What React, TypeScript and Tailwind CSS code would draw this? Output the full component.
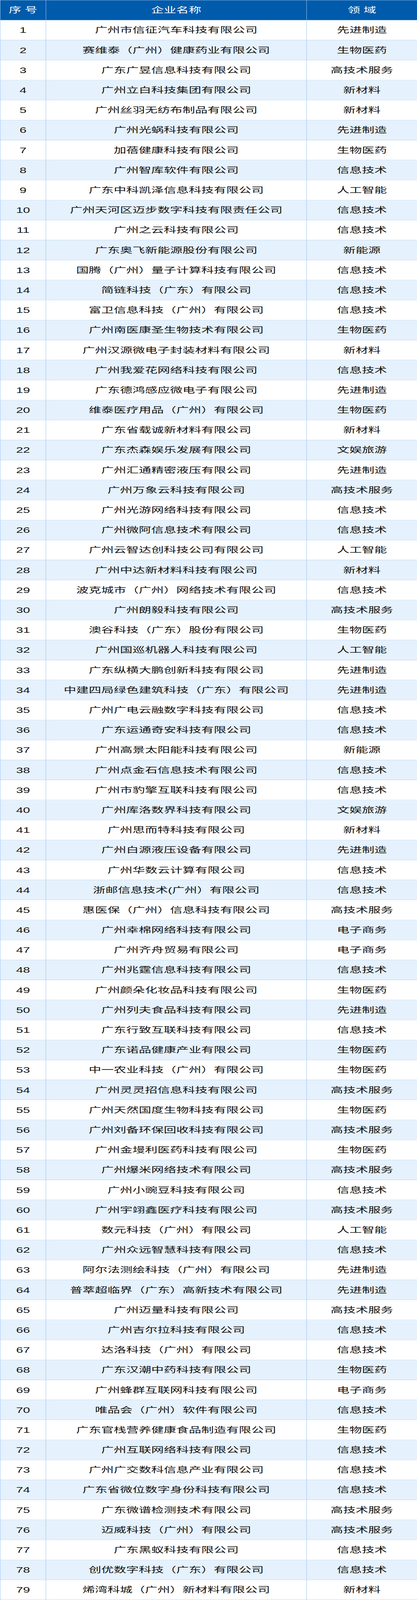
import { useLayoutEffect, useState } from 'react';

const rows: [string, string][] = [
  ['广州市信征汽车科技有限公司', '先进制造'],
  ['赛维泰（广州）健康药业有限公司', '生物医药'],
  ['广东广昱信息科技有限公司', '高技术服务'],
  ['广州立白科技集团有限公司', '新材料'],
  ['广州丝羽无纺布制品有限公司', '新材料'],
  ['广州光蜗科技有限公司', '先进制造'],
  ['加蓓健康科技有限公司', '生物医药'],
  ['广州智库软件有限公司', '信息技术'],
  ['广东中科凯泽信息科技有限公司', '人工智能'],
  ['广州天河区迈步数字科技有限责任公司', '信息技术'],
  ['广州之云科技有限公司', '信息技术'],
  ['广东奥飞新能源股份有限公司', '新能源'],
  ['国腾（广州）量子计算科技有限公司', '信息技术'],
  ['简链科技（广东）有限公司', '信息技术'],
  ['富卫信息科技（广州）有限公司', '信息技术'],
  ['广州南医康圣生物技术有限公司', '生物医药'],
  ['广州汉源微电子封装材料有限公司', '新材料'],
  ['广州我爱花网络科技有限公司', '信息技术'],
  ['广东德鸿感应微电子有限公司', '先进制造'],
  ['维泰医疗用品（广州）有限公司', '生物医药'],
  ['广东省载诚新材料有限公司', '新材料'],
  ['广东杰森娱乐发展有限公司', '文娱旅游'],
  ['广州汇通精密液压有限公司', '先进制造'],
  ['广州万象云科技有限公司', '高技术服务'],
  ['广州光游网络科技有限公司', '信息技术'],
  ['广州微阿信息技术有限公司', '信息技术'],
  ['广州云智达创科技公司有限公司', '人工智能'],
  ['广州中达新材料科技有限公司', '新材料'],
  ['波克城市（广州）网络技术有限公司', '信息技术'],
  ['广州朗毅科技有限公司', '高技术服务'],
  ['澳谷科技（广东）股份有限公司', '生物医药'],
  ['广州国巡机器人科技有限公司', '人工智能'],
  ['广东纵横大鹏创新科技有限公司', '先进制造'],
  ['中建四局绿色建筑科技（广东）有限公司', '先进制造'],
  ['广州广电云融数字科技有限公司', '信息技术'],
  ['广东运通奇安科技有限公司', '信息技术'],
  ['广州高景太阳能科技有限公司', '新能源'],
  ['广州点金石信息技术有限公司', '信息技术'],
  ['广州市豹擎互联科技有限公司', '信息技术'],
  ['广州库洛数界科技有限公司', '文娱旅游'],
  ['广州思而特科技有限公司', '新材料'],
  ['广州白源液压设备有限公司', '先进制造'],
  ['广州华数云计算有限公司', '信息技术'],
  ['浙邮信息技术(广州）有限公司', '信息技术'],
  ['惠医保（广州）信息科技有限公司', '高技术服务'],
  ['广州幸棉网络科技有限公司', '电子商务'],
  ['广州齐舟贸易有限公司', '电子商务'],
  ['广州兆霆信息科技有限公司', '信息技术'],
  ['广州颜朵化妆品科技有限公司', '生物医药'],
  ['广州列夫食品科技有限公司', '先进制造'],
  ['广东行致互联科技有限公司', '信息技术'],
  ['广东诺品健康产业有限公司', '生物医药'],
  ['中一农业科技（广州）有限公司', '生物医药'],
  ['广州灵灵招信息科技有限公司', '高技术服务'],
  ['广州天然国度生物科技有限公司', '生物医药'],
  ['广州刘备环保回收科技有限公司', '高技术服务'],
  ['广州金墁利医药科技有限公司', '生物医药'],
  ['广州爆米网络技术有限公司', '高技术服务'],
  ['广州小豌豆科技有限公司', '信息技术'],
  ['广州宇翊鑫医疗科技有限公司', '高技术服务'],
  ['数元科技（广州）有限公司', '人工智能'],
  ['广州众远智慧科技有限公司', '信息技术'],
  ['阿尔法测绘科技（广州）有限公司', '先进制造'],
  ['普萃超临界（广东）高新技术有限公司', '先进制造'],
  ['广州迈量科技有限公司', '高技术服务'],
  ['广州吉尔拉科技有限公司', '信息技术'],
  ['达洛科技（广州）有限公司', '信息技术'],
  ['广东汉潮中药科技有限公司', '生物医药'],
  ['广州蜂群互联网科技有限公司', '电子商务'],
  ['唯品会（广州）软件有限公司', '信息技术'],
  ['广东官栈营养健康食品制造有限公司', '生物医药'],
  ['广州互联网络科技有限公司', '信息技术'],
  ['广州广交数科信息产业有限公司', '信息技术'],
  ['广东省微位数字身份科技有限公司', '信息技术'],
  ['广东微谱检测技术有限公司', '高技术服务'],
  ['迈威科技（广州）有限公司', '高技术服务'],
  ['广东黑蚁科技有限公司', '信息技术'],
  ['创优数字科技（广东）有限公司', '信息技术'],
  ['烯湾科城（广州）新材料有限公司', '新材料'],
];

// full table height at its natural size
const TABLE_H = 6401;

const cell = 'flex h-full items-center justify-center whitespace-nowrap border-r border-[#9cc3ef]';

export default function App() {
  // the window may be shorter than the table; squeeze it to fit the screen height
  const [scale, setScale] = useState(1);
  useLayoutEffect(() => {
    setScale(Math.min(1, window.innerHeight / TABLE_H));
  }, []);

  return (
    <div className="h-screen w-[1067px] overflow-hidden bg-white">
      <div
        className="origin-top font-['Liberation_Sans','Noto_Sans_CJK_SC',sans-serif] text-[32px] leading-none text-[#111]"
        style={{ transform: `scaleY(${scale})` }}
      >
        <div className="border-t border-l border-[#9cc3ef]">
          <div className="grid h-[80px] grid-cols-[117px_667px_283px] border-b border-[#9cc3ef] bg-[#005bac] text-white">
            <div className={cell}>序 号</div>
            <div className={cell}>企业名称</div>
            <div className={cell}>领 域</div>
          </div>
          {rows.map(([name, field], i) => (
            <div
              key={i}
              className={
                i % 2 === 1
                  ? 'grid h-[80px] grid-cols-[117px_667px_283px] border-b border-[#9cc3ef] bg-[#e5f1fc]'
                  : 'grid h-[80px] grid-cols-[117px_667px_283px] border-b border-[#9cc3ef] bg-white'
              }
            >
              <div className={cell}>{i + 1}</div>
              <div className={cell}>{name}</div>
              <div className={cell}>{field}</div>
            </div>
          ))}
        </div>
      </div>
    </div>
  );
}
